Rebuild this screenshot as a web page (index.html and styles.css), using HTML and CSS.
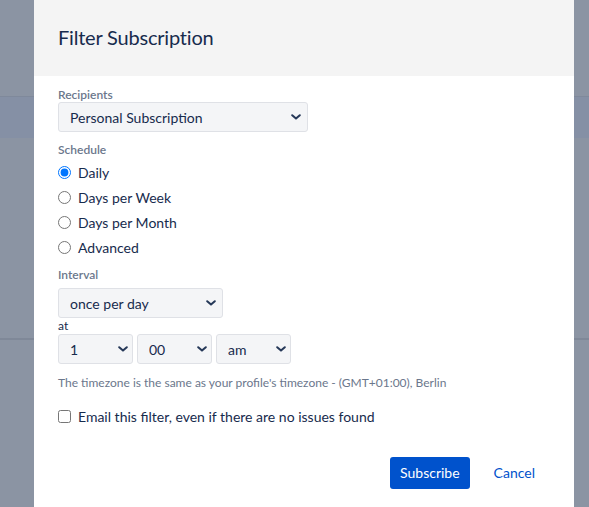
FILE: index.html
```html
<!DOCTYPE html>
<html lang="en">
<head>
<meta charset="utf-8">
<title>Filter Subscription</title>
<link rel="stylesheet" href="styles.css">
</head>
<body>
<div class="backdrop">
  <div class="bg-top"></div>
  <div class="bg-band"></div>
  <div class="bg-mid"></div>
  <div class="bg-line"></div>
  <div class="bg-rest"></div>
</div>

<div class="dialog" role="dialog" aria-labelledby="dlg-title">
  <header class="dlg-head">
    <h2 id="dlg-title" class="dlg-title">Filter Subscription</h2>
  </header>

  <form class="dlg-body">
    <label class="lbl lbl-recipients" for="recipients">Recipients</label>
    <div class="sel sel-recipients">
      <select id="recipients">
        <option>Personal Subscription</option>
      </select>
      <svg class="chev" width="10" height="6" viewBox="0 0 10 6"><path d="M1.2 1.2 L5 4.6 L8.8 1.2" fill="none" stroke="#253858" stroke-width="2" stroke-linecap="round" stroke-linejoin="round"/></svg>
    </div>

    <div class="lbl lbl-schedule">Schedule</div>
    <div class="radios">
      <label class="radio"><input type="radio" name="sched" checked><span>Daily</span></label>
      <label class="radio"><input type="radio" name="sched"><span>Days per Week</span></label>
      <label class="radio"><input type="radio" name="sched"><span>Days per Month</span></label>
      <label class="radio"><input type="radio" name="sched"><span>Advanced</span></label>
    </div>

    <label class="lbl lbl-interval" for="interval">Interval</label>
    <div class="sel sel-interval">
      <select id="interval">
        <option>once per day</option>
      </select>
      <svg class="chev" width="10" height="6" viewBox="0 0 10 6"><path d="M1.2 1.2 L5 4.6 L8.8 1.2" fill="none" stroke="#253858" stroke-width="2" stroke-linecap="round" stroke-linejoin="round"/></svg>
    </div>

    <div class="at">at</div>
    <div class="time-row">
      <div class="sel sel-small">
        <select><option>1</option></select>
        <svg class="chev" width="10" height="6" viewBox="0 0 10 6"><path d="M1.2 1.2 L5 4.6 L8.8 1.2" fill="none" stroke="#253858" stroke-width="2" stroke-linecap="round" stroke-linejoin="round"/></svg>
      </div>
      <div class="sel sel-small">
        <select><option>00</option></select>
        <svg class="chev" width="10" height="6" viewBox="0 0 10 6"><path d="M1.2 1.2 L5 4.6 L8.8 1.2" fill="none" stroke="#253858" stroke-width="2" stroke-linecap="round" stroke-linejoin="round"/></svg>
      </div>
      <div class="sel sel-small">
        <select><option>am</option></select>
        <svg class="chev" width="10" height="6" viewBox="0 0 10 6"><path d="M1.2 1.2 L5 4.6 L8.8 1.2" fill="none" stroke="#253858" stroke-width="2" stroke-linecap="round" stroke-linejoin="round"/></svg>
      </div>
    </div>

    <p class="tz">The timezone is the same as your profile's timezone - (GMT+01:00), Berlin</p>

    <label class="check"><input type="checkbox"><span>Email this filter, even if there are no issues found</span></label>

    <div class="dlg-foot">
      <button type="button" class="btn btn-primary">Subscribe</button>
      <button type="button" class="btn btn-link">Cancel</button>
    </div>
  </form>
</div>
</body>
</html>
```

FILE: styles.css
```css
html, body {
  margin: 0;
  padding: 0;
}

body {
  width: 589px;
  height: 507px;
  overflow: hidden;
  position: relative;
  background: #8b94a3;
  font-family: "Lato", "Liberation Sans", sans-serif;
  color: #172b4d;
}

/* page behind the blanket */
.backdrop {
  display: flex;
  flex-direction: column;
  height: 507px;
}
.bg-top { height: 96px; background: #8b94a3; }
.bg-band { height: 42px; background: #8590a5; border-top: 1px solid #7f899b; box-sizing: border-box; }
.bg-mid { height: 200px; background: #8b94a3; }
.bg-line { height: 2px; background: #7f8898; }
.bg-rest { flex: 1; background: #8b94a3; }

/* dialog */
.dialog {
  position: absolute;
  left: 34px;
  top: 0;
  width: 540px;
  height: 507px;
  background: #ffffff;
  display: flex;
  flex-direction: column;
}

.dlg-head {
  height: 76px;
  background: #f4f4f4;
  display: flex;
  align-items: center;
  padding: 0 24px;
  box-sizing: border-box;
}

.dlg-title {
  margin: 0 0 2px 0;
  font-size: 20px;
  font-weight: 400;
  line-height: 24px;
  letter-spacing: -0.2px;
  color: #172b4d;
}

.dlg-body {
  padding: 11px 24px 0 24px;
  display: flex;
  flex-direction: column;
  align-items: flex-start;
}

.lbl {
  display: block;
  font-size: 12px;
  line-height: 16px;
  font-weight: 600;
  color: #6b778c;
}
.lbl-schedule { margin-top: 10px; }
.lbl-interval { margin-top: 7px; }
.sel-recipients { margin-top: -1px; }

/* selects */
.sel {
  position: relative;
  height: 30px;
}
.sel select {
  appearance: none;
  -webkit-appearance: none;
  height: 30px;
  width: 100%;
  box-sizing: border-box;
  margin: 0;
  padding: 0 24px 0 11px;
  border: 1px solid #dfe1e6;
  border-radius: 3px;
  background: #f4f5f7;
  font-family: inherit;
  font-size: 14px;
  color: #172b4d;
  outline: none;
}
.sel .chev {
  position: absolute;
  right: 7px;
  top: 12px;
  pointer-events: none;
}
.sel-recipients { width: 250px; }
.sel-interval { width: 165px; margin-top: 5px; }
.sel-small { width: 75px; }
.sel-small .chev { right: 5px; }

/* radios */
.radios {
  margin-top: 2px;
  display: flex;
  flex-direction: column;
}
.radio {
  height: 25px;
  display: flex;
  align-items: center;
  gap: 7px;
  font-size: 14px;
  color: #172b4d;
}
.radio input {
  margin: 0;
  width: 13px;
  height: 13px;
}

.at {
  font-size: 12px;
  line-height: 16px;
  color: #172b4d;
}

.time-row {
  display: flex;
  gap: 4px;
}

.tz {
  margin: 11px 0 0 0;
  font-size: 12px;
  line-height: 16px;
  color: #6b778c;
}

.check {
  margin-top: 15px;
  height: 20px;
  display: flex;
  align-items: center;
  gap: 7px;
  font-size: 14px;
  color: #172b4d;
}
.check input {
  margin: 0;
  width: 13px;
  height: 13px;
}

.dlg-foot {
  align-self: stretch;
  margin-top: 31px;
  padding-right: 5px;
  display: flex;
  justify-content: flex-end;
  gap: 14px;
}

.btn {
  height: 32px;
  padding: 0 10px;
  border: 0;
  border-radius: 3px;
  font-family: inherit;
  font-size: 14px;
  line-height: 32px;
  cursor: pointer;
}
.btn-primary {
  background: #0052cc;
  color: #ffffff;
}
.btn-link {
  background: transparent;
  color: #0052cc;
}
```
